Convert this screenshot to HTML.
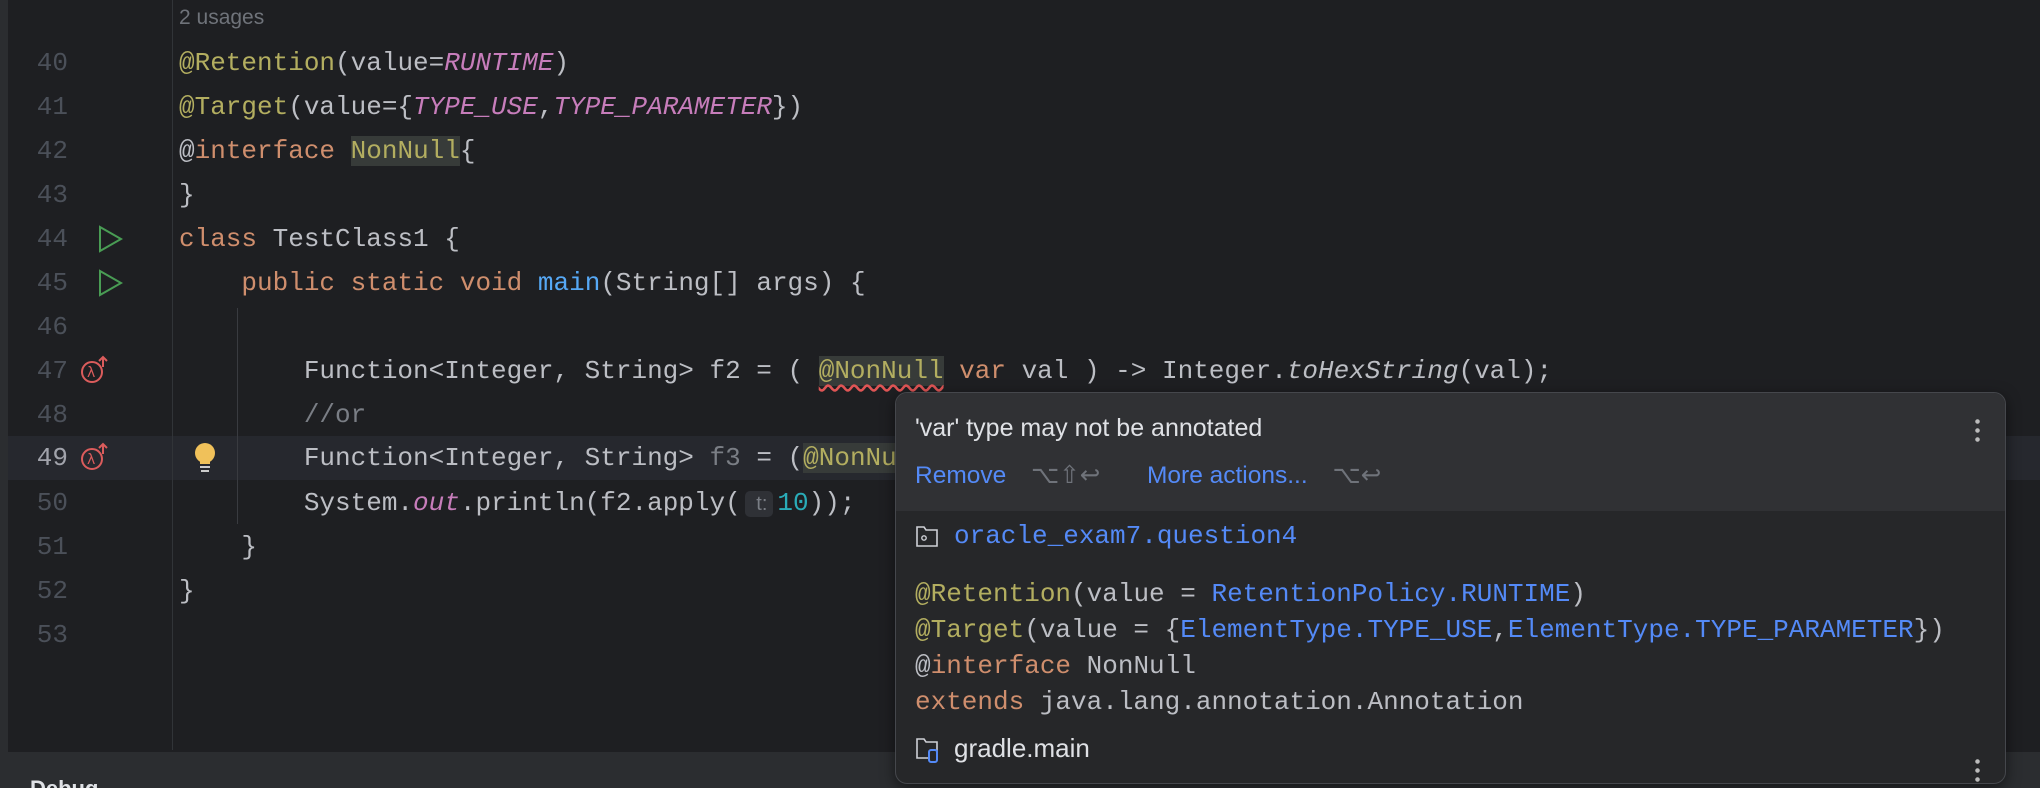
<!DOCTYPE html>
<html style="overflow:hidden;height:788px"><head><meta charset="utf-8"><style>
*{margin:0;padding:0;box-sizing:border-box}
body{width:2040px;height:788px;background:#1e1f22;overflow:hidden;position:relative;font-family:"Liberation Mono",monospace;font-size:26px;color:#bcbec4}
.ln{position:absolute;left:0;width:68px;text-align:right;color:#4b5059;line-height:44px;height:44px}
.c{position:absolute;left:179px;white-space:pre;line-height:44px;height:44px}
.k{color:#cf8e6d}.a{color:#b3ae60}.p{color:#c77dbb;font-style:italic}.m{color:#56a8f5}.n{color:#2aacb8}.g{color:#7a7e85}.i{font-style:italic}
.hl{background:#373b39}
.sans{font-family:"Liberation Sans",sans-serif}
.b{color:#548af7}
</style></head><body>
<div style="position:absolute;left:0;top:0;width:8px;height:788px;background:#2b2d30"></div>
<div style="position:absolute;left:8px;top:436px;width:2032px;height:44px;background:#26282e"></div>
<div style="position:absolute;left:172px;top:0;width:1px;height:750px;background:#313438"></div>
<div style="position:absolute;left:237px;top:308px;width:1px;height:216px;background:#393b40"></div>
<div class="sans" style="position:absolute;left:179px;top:6px;font-size:21px;color:#6f737a">2 usages</div>

<div class="ln" style="top:41px">40</div><div class="c" style="top:41px"><span class="a">@Retention</span>(value=<span class="p">RUNTIME</span>)</div>
<div class="ln" style="top:85px">41</div><div class="c" style="top:85px"><span class="a">@Target</span>(value={<span class="p">TYPE_USE</span>,<span class="p">TYPE_PARAMETER</span>})</div>
<div class="ln" style="top:129px">42</div><div class="c" style="top:129px">@<span class="k">interface</span> <span class="a hl">NonNull</span>{</div>
<div class="ln" style="top:173px">43</div><div class="c" style="top:173px">}</div>
<div class="ln" style="top:217px">44</div><div class="c" style="top:217px"><span class="k">class</span> TestClass1 {</div>
<div class="ln" style="top:261px">45</div><div class="c" style="top:261px">    <span class="k">public static void</span> <span class="m">main</span>(String[] args) {</div>
<div class="ln" style="top:305px">46</div>
<div class="ln" style="top:349px">47</div><div class="c" style="top:349px">        Function&lt;Integer, String&gt; f2 = ( <span class="a hl" style="text-decoration:underline wavy #e05555;text-underline-offset:6px">@NonNull</span> <span class="k">var</span> val ) -&gt; Integer.<span class="i">toHexString</span>(val);</div>
<div class="ln" style="top:393px">48</div><div class="c" style="top:393px">        <span class="g">//or</span></div>
<div class="ln" style="top:436px;color:#a1a3ab">49</div><div class="c" style="top:436px">        Function&lt;Integer, String&gt; <span class="g">f3</span> = (<span class="a hl">@NonNull</span></div>
<div class="ln" style="top:481px">50</div><div class="c" style="top:481px">        System.<span class="p">out</span>.println(f2.apply(<span style="background:#2f3136;color:#7a7e85;border-radius:5px;font-family:'Liberation Sans',sans-serif;font-size:20px;padding:2px 6px;margin:0 4px"> t:</span><span class="n">10</span>));</div>
<div class="ln" style="top:525px">51</div><div class="c" style="top:525px">    }</div>
<div class="ln" style="top:569px">52</div><div class="c" style="top:569px">}</div>
<div class="ln" style="top:613px">53</div>

<svg style="position:absolute;left:96px;top:225px" width="30" height="120" viewBox="0 0 30 120"><path d="M4 2 L25 14 L4 26 Z" fill="none" stroke="#499c54" stroke-width="2"/><path d="M4 46 L25 58 L4 70 Z" fill="none" stroke="#499c54" stroke-width="2"/></svg>
<svg style="position:absolute;left:78px;top:355px" width="34" height="115" viewBox="0 0 34 115"><g fill="none" stroke="#db5c5c" stroke-width="2"><circle cx="14" cy="17" r="10"/><path d="M25 12V2M21 6l4-4 4 4"/><circle cx="14" cy="105" r="10" transform="translate(0 -1)"/><path d="M25 99V89M21 93l4-4 4 4"/></g><text x="9" y="22" font-size="14" fill="#db5c5c" font-family="DejaVu Sans">λ</text><text x="9" y="109" font-size="14" fill="#db5c5c" font-family="DejaVu Sans">λ</text></svg>
<svg style="position:absolute;left:194px;top:443px" width="22" height="32" viewBox="0 0 22 32"><circle cx="11" cy="10" r="10" fill="#f0c15a"/><rect x="6" y="14" width="10" height="7" fill="#f0c15a"/><rect x="6" y="23" width="10" height="2" fill="#ccc"/><rect x="7" y="27" width="8" height="2" fill="#ccc"/></svg>

<div style="position:absolute;left:0;top:752px;width:2040px;height:36px;background:#2b2d30;overflow:hidden"><div class="sans" style="position:absolute;left:30px;top:24px;font-size:22px;color:#dfe1e5;font-weight:bold">Debug</div></div>

<div style="position:absolute;left:895px;top:392px;width:1111px;height:392px;border-radius:12px;background:#262729;border:1px solid #45474c;overflow:hidden;box-shadow:0 4px 14px rgba(0,0,0,.5)">
<div style="height:118px;background:#303134"></div>
<div class="sans" style="position:absolute;left:19px;top:21px;font-size:25px;color:#dfe1e5">'var' type may not be annotated</div>
<div class="sans" style="position:absolute;left:19px;top:67px;font-size:24.5px"><span class="b">Remove</span> <span style="color:#6f737a;margin-left:18px">⌥⇧↩</span></div>
<div class="sans" style="position:absolute;left:251px;top:67px;font-size:24.5px"><span class="b">More actions...</span> <span style="color:#6f737a;margin-left:18px">⌥↩</span></div>
<div style="position:absolute;left:1079px;top:24px;width:5px;height:26px;background:radial-gradient(circle,#bbb 2px,transparent 2.5px) 0 0/5px 9px"></div>
<div style="position:absolute;left:1079px;top:364px;width:5px;height:26px;background:radial-gradient(circle,#bbb 2px,transparent 2.5px) 0 0/5px 9px"></div>
<svg style="position:absolute;left:19px;top:131px" width="24" height="24" viewBox="0 0 24 24"><path d="M2 3h7l2 3h11v16H2z" fill="none" stroke="#ced0d6" stroke-width="1.6"/><circle cx="9" cy="14" r="2.2" fill="none" stroke="#ced0d6" stroke-width="1.4"/></svg>
<div class="b" style="position:absolute;left:58px;top:125px;line-height:36px">oracle_exam7.question4</div>
<div style="position:absolute;left:19px;top:183px;line-height:36px;white-space:pre"><span class="a">@Retention</span>(value = <span class="b">RetentionPolicy.RUNTIME</span>)
<span class="a">@Target</span>(value = {<span class="b">ElementType.TYPE_USE</span>,<span class="b">ElementType.TYPE_PARAMETER</span>})
@<span class="k">interface</span> NonNull
<span class="k">extends</span> java.lang.annotation.Annotation</div>
<svg style="position:absolute;left:19px;top:343px" width="26" height="28" viewBox="0 0 26 28"><path d="M2 3h7l2 3h11v16H2z" fill="none" stroke="#ced0d6" stroke-width="1.6"/><rect x="14" y="14" width="8" height="12" rx="2" fill="#262729" stroke="#548af7" stroke-width="2"/></svg>
<div class="sans" style="position:absolute;left:58px;top:340px;font-size:26px;color:#dfe1e5">gradle.main</div>
</div>
</body></html>
